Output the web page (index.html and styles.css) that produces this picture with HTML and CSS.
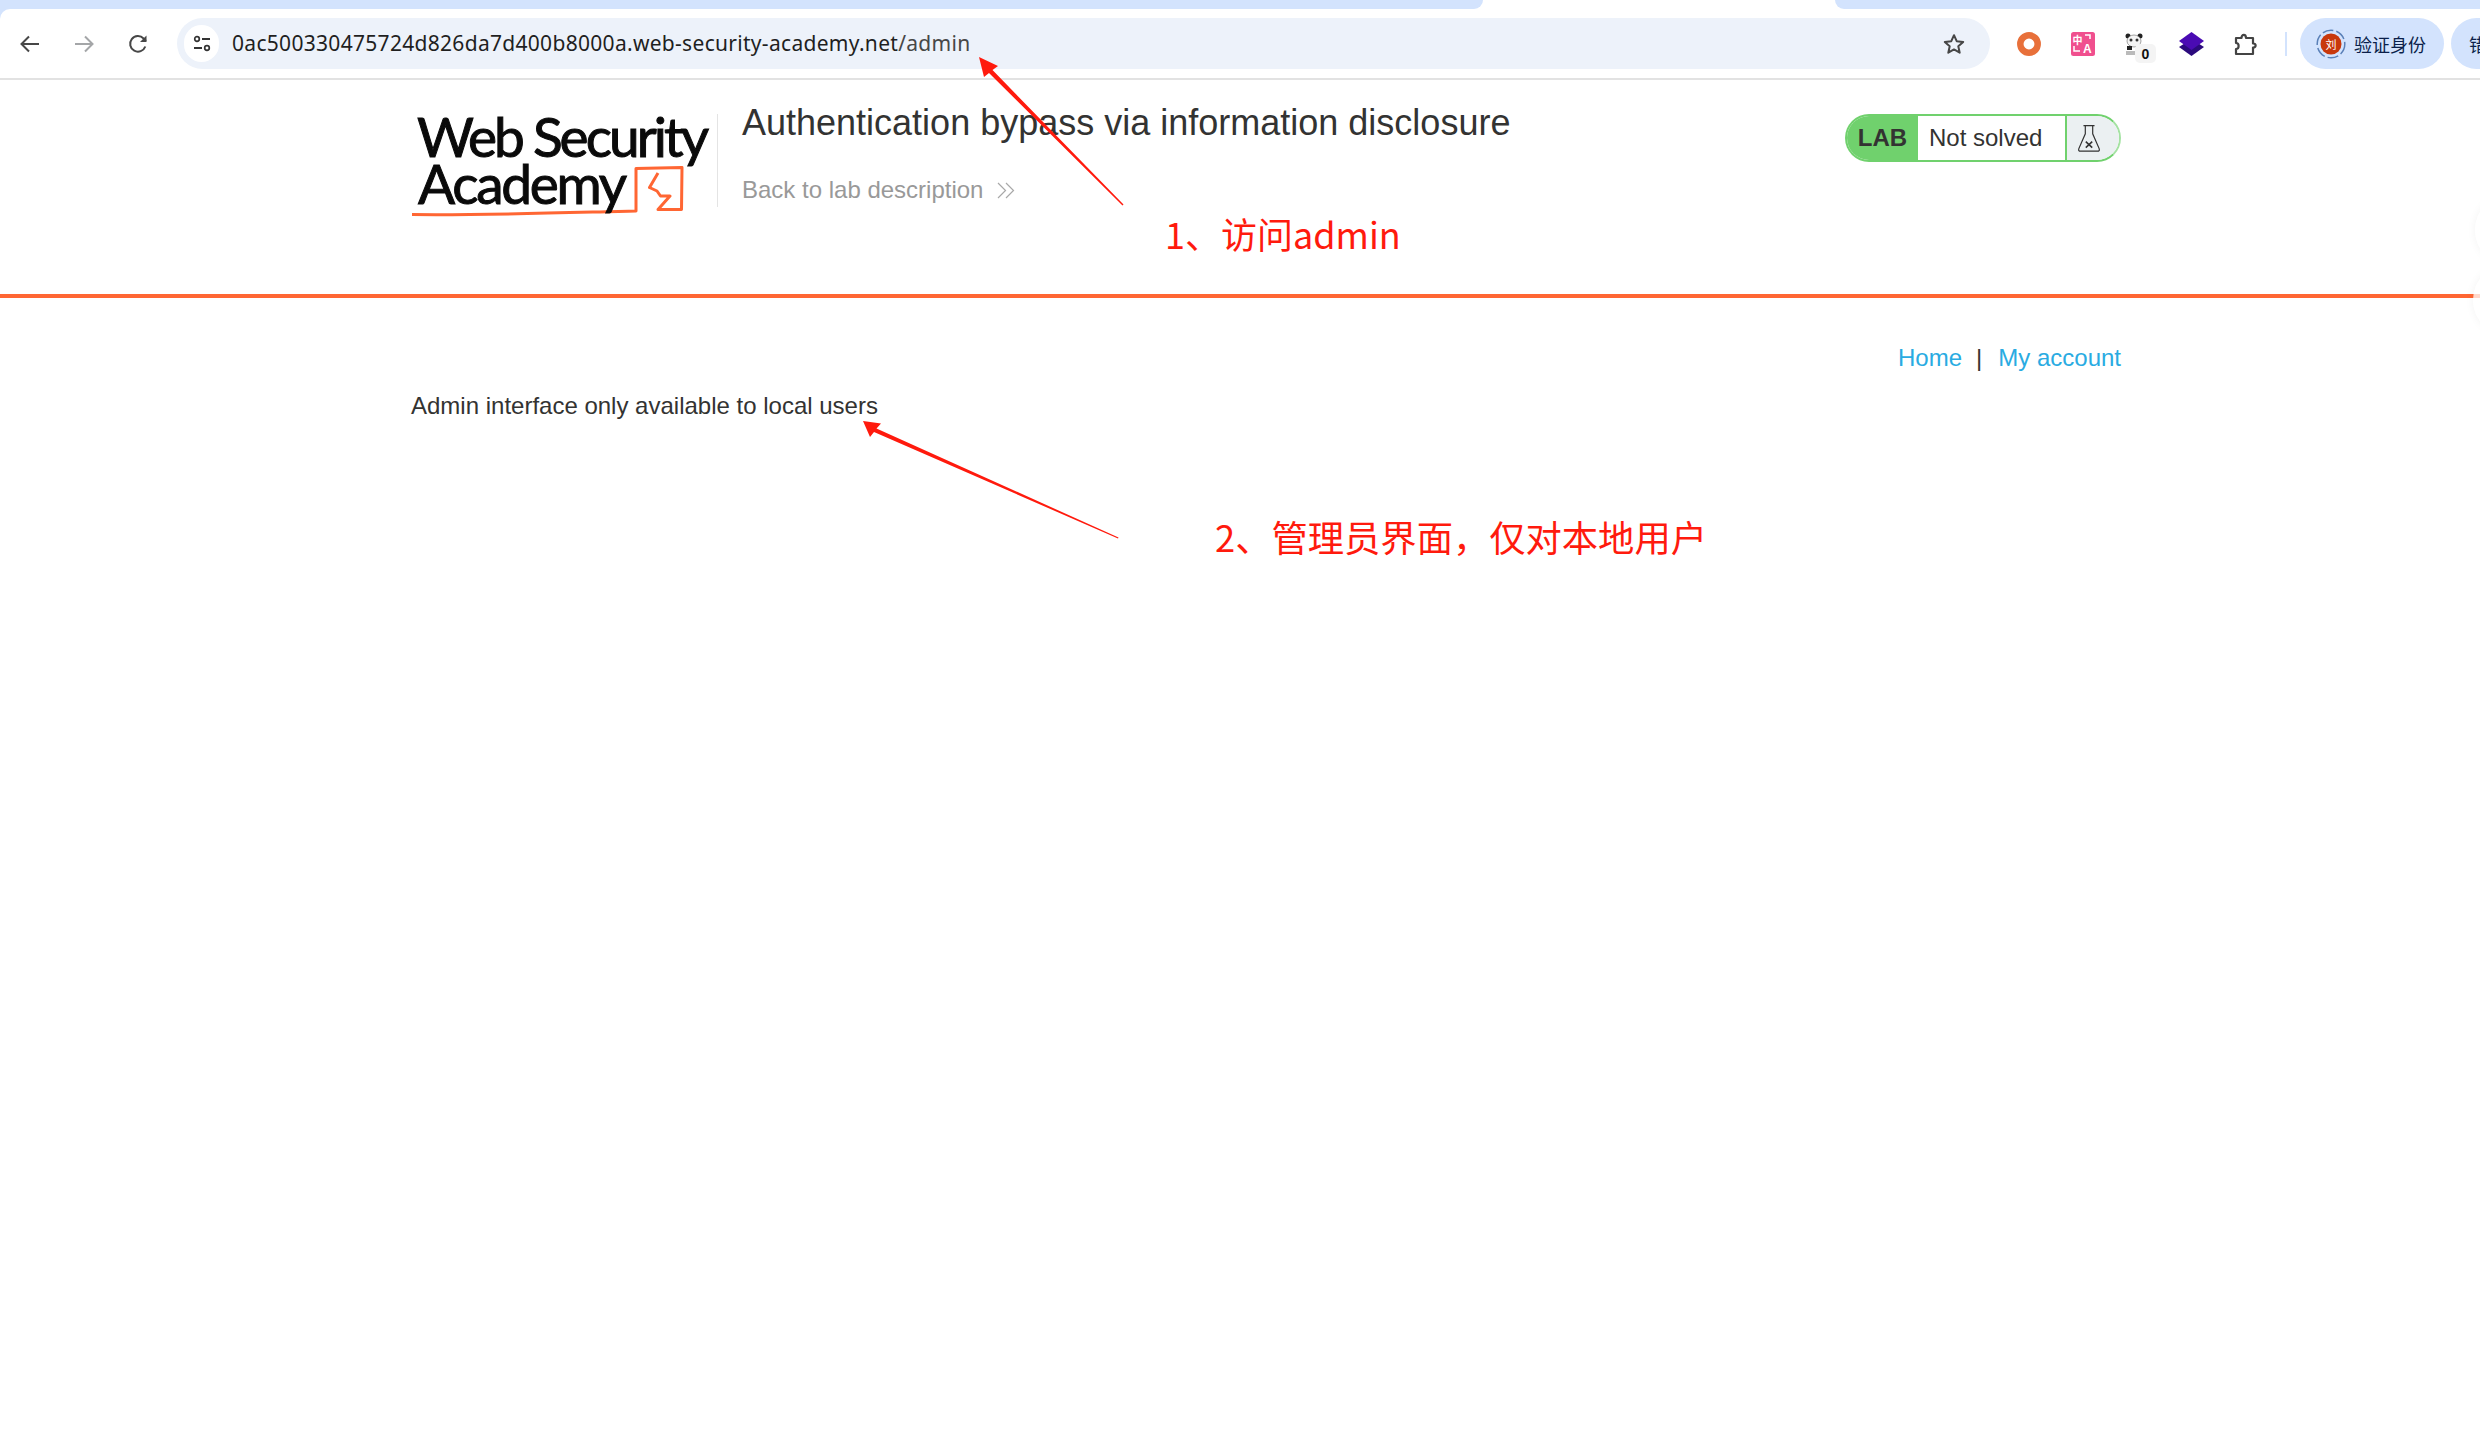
FILE: index.html
```html
<!DOCTYPE html>
<html lang="en">
<head>
<meta charset="utf-8">
<title>Authentication bypass via information disclosure</title>
<link rel="stylesheet" href="styles.css">
</head>
<body>
<div class="tabstrip">
  <div class="tab tab-left"></div>
  <div class="tab-active"></div>
  <div class="tab tab-right"></div>
</div>
<div class="toolbar-wrap">
<div class="toolbar">
  <button class="nav-btn">
    <svg viewBox="0 0 24 24" width="24" height="24"><path d="M21 12H4.500M11 4.500 3.500 12l7.500 7.500" fill="none" stroke="#474747" stroke-width="2"/></svg>
  </button>
  <button class="nav-btn">
    <svg viewBox="0 0 24 24" width="24" height="24"><path d="M3 12h16.500M13 4.500l7.500 7.500-7.500 7.500" fill="none" stroke="#a4a6a8" stroke-width="2"/></svg>
  </button>
  <button class="nav-btn">
    <svg viewBox="0 0 24 24" width="24" height="24"><path d="M19.300 14.500A7.800 7.800 0 1 1 17.600 6.500L20 9" fill="none" stroke="#474747" stroke-width="2"/><path d="M20.500 3.500v6.500H14z" fill="#474747"/></svg>
  </button>
  <div class="omnibox">
    <span class="site-info">
      <svg viewBox="0 0 20 20" width="20" height="20"><circle cx="5" cy="5" r="2.300" fill="none" stroke="#333" stroke-width="1.700"/><path d="M10 5h8M2 14h8" stroke="#333" stroke-width="1.800"/><circle cx="15" cy="14" r="2.300" fill="none" stroke="#333" stroke-width="1.700"/></svg>
    </span>
    <span class="url">0ac500330475724d826da7d400b8000a.web-security-academy.net<span class="url-path">/admin</span></span>
    <svg class="star" viewBox="0 0 24 24" width="24" height="24"><path d="M12 3.200l2.700 6 6.500.7-4.900 4.400 1.400 6.400-5.700-3.300-5.700 3.300 1.400-6.400-4.900-4.400 6.500-.7z" fill="none" stroke="#474747" stroke-width="2" stroke-linejoin="round"/></svg>
  </div>
  <div class="extensions">
    <span class="ext"><svg viewBox="0 0 24 24" width="24" height="24"><circle cx="12" cy="12" r="8.700" fill="none" stroke="#e8703a" stroke-width="6.500"/></svg></span>
    <span class="ext"><svg viewBox="0 0 24 24" width="24" height="24"><rect width="24" height="24" rx="2.500" fill="#f04f8e"/><text x="1.500" y="11.500" class="ext-glyph">中</text><text x="12" y="21" class="ext-glyph-a">A</text><path d="M14 3h5v4M3 14v5h6" fill="none" stroke="#fff" stroke-width="1.500"/></svg></span>
    <span class="ext ext-panda">
      <svg viewBox="0 0 18 22" width="18" height="22"><circle cx="3" cy="3" r="2.500" fill="#222"/><circle cx="15" cy="3" r="2.500" fill="#222"/><ellipse cx="9" cy="8" rx="7" ry="6" fill="#f4f4f4" stroke="#666" stroke-width=".6"/><circle cx="6" cy="7" r="1.500" fill="#333"/><circle cx="12" cy="7" r="1.500" fill="#333"/><path d="M2 13h5v4H2z" fill="#222"/><path d="M1 19h12M1 21h12" stroke="#777"/></svg>
      <span class="ext-badge">0</span>
    </span>
    <span class="ext"><svg viewBox="0 0 25 24" width="25" height="24"><path d="M12.500 7 25 15 12.500 24 0 15z" fill="#2b0a7d"/><path d="M12.500 0 25 9 12.500 18 0 9z" fill="#4a0bb3"/></svg></span>
    <span class="ext"><svg viewBox="0 0 24 24" width="24" height="24"><path d="M3 6h5.500c0-4.200 4.500-4.200 4.500 0H20v5.500c3.500 0 3.500 4 0 4V22H3v-5c3.500 0 3.500-6 0-6z" fill="none" stroke="#444" stroke-width="2.200" stroke-linejoin="round"/></svg></span>
  </div>
  <span class="toolbar-divider"></span>
  <div class="profile-chip">
    <span class="avatar">
      <svg viewBox="0 0 30 30" width="30" height="30"><circle cx="15" cy="15" r="13.800" fill="none" stroke="#5a80b8" stroke-width="1.500" stroke-dasharray="11 3"/><circle cx="15" cy="15" r="10.500" fill="#c8380c"/><text x="15" y="19.500" class="avatar-glyph">刘</text></svg>
    </span>
    <span class="chip-text">验证身份</span>
  </div>
  <div class="update-chip"><span class="chip-text">错误</span></div>
</div>
</div>

<header class="lab-header">
  <div class="lab-header-inner">
    <svg class="logo" viewBox="411 110 300 110" width="300" height="110">
      <path d="M412 214.500C480 215.500 570 212.500 636 211V168.500L682 167.500 681.500 209.500H658L670 196H660.500L657 191 649.500 187.500 658 173" fill="none" stroke="#ff6633" stroke-width="3" stroke-linejoin="round"/>
      <text x="417" y="157" textLength="292" class="logo-text">Web Security</text>
      <text x="418" y="204" textLength="209" class="logo-text">Academy</text>
    </svg>
    <span class="header-divider"></span>
    <div class="title-block">
      <h1 class="lab-title">Authentication bypass via information disclosure</h1>
      <a class="back-link">Back to lab description
        <svg viewBox="0 0 18 17" width="18" height="17"><path d="M1 1l7.500 7.500L1 16M9 1l7.500 7.500L9 16" fill="none" stroke="#a8a8a8" stroke-width="1.200"/></svg>
      </a>
    </div>
    <div class="lab-status">
      <span class="lab-tag">LAB</span>
      <span class="lab-state">Not solved</span>
      <span class="lab-flask">
        <svg viewBox="0 0 26 32" width="24" height="30"><path d="M7 2.500h12M9 2.500v9L2 27.500q-1 2.800 2 2.800h18q3 0 2-2.800L17 11.500v-9" fill="none" stroke="#333" stroke-width="1.300"/><path d="M9.500 20l7 6.500M16.500 20l-7 6.500" stroke="#333" stroke-width="1.700"/></svg>
      </span>
    </div>
  </div>
</header>

<main class="content">
  <nav class="top-links">
    <a class="top-link top-link-home">Home</a>
    <span>|</span>
    <a class="top-link">My account</a>
  </nav>
  <p class="message">Admin interface only available to local users</p>
</main>

<svg class="annotations" viewBox="0 0 2480 1443" width="2480" height="1443">
  <path d="M979 57 998 66 992.500 70 1123.500 204.500 1122.500 205.500 989 73 984 77z" fill="#ff1a0d"/>
  <path d="M863 421 881 423.500 876.500 428.500 1118.500 537.500 1118 538.500 874 432 870 437z" fill="#ff1a0d"/>
</svg>
<span class="note note-one">1、访问admin</span>
<span class="note note-two">2、管理员界面，仅对本地用户</span>
<span class="edge-bubble edge-bubble-one"></span>
<span class="edge-bubble edge-bubble-two"></span>
</body>
</html>
```

FILE: styles.css
```css
* { box-sizing: border-box; }
html, body { margin: 0; padding: 0; background: #fff; }
body {
  width: 2480px;
  height: 1443px;
  overflow: hidden;
  position: relative;
  font-family: "Liberation Sans", Arial, sans-serif;
  font-size: 24px;
  color: #333332;
}

.tabstrip { display: flex; height: 9px; background: #fff; }
.tab { background: #d3e3fd; }
.tab-left { width: 1483px; border-bottom-right-radius: 10px; }
.tab-active { width: 352px; }
.tab-right { flex: 1; border-bottom-left-radius: 10px; }

.toolbar-wrap { background: linear-gradient(to right, #d3e3fd 12px, #fff 12px); }
.toolbar {
  display: flex;
  align-items: center;
  height: 69px;
  padding: 0 0 0 18px;
  background: #fff;
  border-top-left-radius: 10px;
  overflow: hidden;
}
.nav-btn {
  flex: none;
  width: 24px;
  height: 24px;
  padding: 0;
  margin-right: 30px;
  border: 0;
  background: none;
  display: flex;
}
.nav-btn:nth-child(3) { margin-right: 27px; }

.omnibox {
  flex: none;
  display: flex;
  align-items: center;
  width: 1813px;
  height: 51px;
  padding: 0 24px 0 7px;
  border-radius: 26px;
  background: #edf2fa;
}
.site-info {
  flex: none;
  display: flex;
  align-items: center;
  justify-content: center;
  width: 35px;
  height: 37px;
  border-radius: 18px;
  background: #fff;
}
.url {
  margin: 0 0 1px 13px;
  font-family: "Noto Sans", sans-serif;
  font-size: 21px;
  letter-spacing: .3px;
  color: #1f1f1f;
  white-space: nowrap;
}
.url-path { color: #474747; }
.star { margin-left: auto; }

.extensions { display: flex; margin-left: 12px; flex: none; }
.ext {
  position: relative;
  display: flex;
  align-items: center;
  justify-content: center;
  width: 54px;
  height: 24px;
}
.ext-glyph { font: 700 10px "Noto Sans CJK SC", sans-serif; fill: #fff; }
.ext-glyph-a { font: 700 12px "Liberation Sans", sans-serif; fill: #fff; }
.ext-panda svg { margin-right: 6px; margin-top: 1px; }
.ext-badge {
  position: absolute;
  left: 25px;
  top: 12px;
  width: 21px;
  height: 19px;
  border-radius: 5px;
  background: #f4f4f4;
  font: 700 14px/20px "Liberation Sans", sans-serif;
  color: #111;
  text-align: center;
}
.toolbar-divider {
  flex: none;
  width: 2px;
  height: 24px;
  margin-left: 13px;
  background: #d3e3fd;
}
.profile-chip, .update-chip {
  flex: none;
  display: flex;
  align-items: center;
  height: 51px;
  background: #d3e3fd;
  border-radius: 26px 0 0 26px;
}
.profile-chip {
  width: 144px;
  margin-left: 13px;
  padding-left: 16px;
  border-radius: 26px;
}
.update-chip {
  width: 60px;
  margin-left: 7px;
  padding-left: 18px;
}
.avatar { display: flex; margin-right: 8px; }
.avatar-glyph {
  font: 400 11px "Noto Sans CJK SC", sans-serif;
  fill: #fff;
  text-anchor: middle;
}
.chip-text {
  font-family: "Noto Sans CJK SC", sans-serif;
  font-size: 18px;
  color: #0b1f4a;
  white-space: nowrap;
}

.lab-header {
  height: 220px;
  border-top: 2px solid #e2e2e2;
  border-bottom: 4px solid #ff6633;
  padding-left: 411px;
}
.lab-header-inner { display: flex; width: 1710px; height: 100%; }
.logo { flex: none; margin-top: 30px; overflow: visible; }
.logo-text {
  font-family: Lato, sans-serif;
  font-size: 55px;
  fill: #0a0a0a;
  stroke: #0a0a0a;
  stroke-width: 1px;
}
.header-divider {
  flex: none;
  width: 1px;
  height: 93px;
  margin: 34px 24px 0 6px;
  background: #e4e4e4;
}
.title-block { flex: none; padding-top: 21px; }
.lab-title {
  margin: 0 0 30px;
  font-size: 36px;
  font-weight: 400;
  line-height: 44px;
  color: #333332;
}
.back-link {
  display: flex;
  align-items: center;
  gap: 14px;
  height: 30px;
  color: #999;
}
.lab-status {
  display: flex;
  align-items: stretch;
  height: 48px;
  width: 276px;
  margin: 34px 0 0 auto;
  border: 2px solid #70d16d;
  border-right-color: #a4e2a2;
  border-radius: 24px;
  overflow: hidden;
}
.lab-tag {
  flex: none;
  width: 71px;
  background: #70d16d;
  font-weight: 700;
  line-height: 44px;
  text-align: center;
  color: #333332;
}
.lab-state {
  flex: none;
  width: 149px;
  padding-left: 11px;
  line-height: 43px;
  background: #fff;
  border-right: 2px solid #70d16d;
}
.lab-flask {
  flex: 1;
  display: flex;
  align-items: center;
  justify-content: center;
  padding-right: 8px;
  background: #ebf0f2;
}

.content { width: 1710px; margin-left: 411px; padding-top: 45px; }
.top-links {
  display: flex;
  justify-content: flex-end;
  gap: 16px;
  line-height: 30px;
}
.top-link { color: #29abe2; }
.top-link-home { margin-right: -2px; }
.message { margin: 18px 0 0; line-height: 30px; }

.annotations { position: absolute; left: 0; top: 0; pointer-events: none; }
.note {
  position: absolute;
  font-family: "Noto Sans CJK SC", sans-serif;
  font-size: 36px;
  line-height: 44px;
  color: #ff1a0d;
  white-space: nowrap;
}
.note-one { left: 1165px; top: 211px; }
.note-two { left: 1215px; top: 514px; font-size: 36.3px; }

.edge-bubble {
  position: absolute;
  width: 70px;
  height: 70px;
  border-radius: 50%;
  background: rgba(255, 255, 255, .75);
  box-shadow: 0 0 10px rgba(0, 0, 0, .05);
}
.edge-bubble-one { left: 2475px; top: 195px; }
.edge-bubble-two { left: 2473px; top: 265px; }
```
